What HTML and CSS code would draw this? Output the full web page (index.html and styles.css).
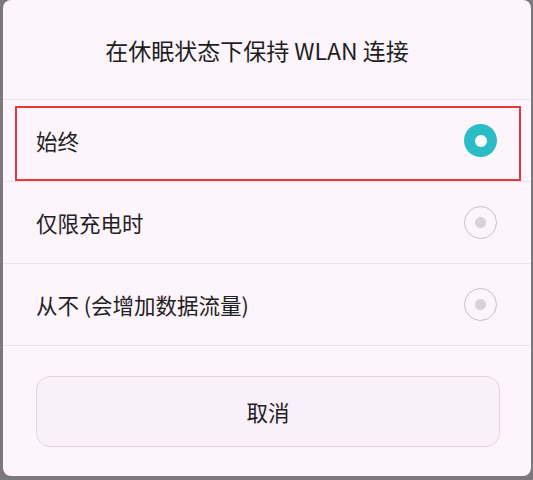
FILE: index.html
```html
<!DOCTYPE html>
<html>
<head>
  <meta charset="utf-8">
  <title>WLAN</title>
  <link rel="stylesheet" href="styles.css">
</head>
<body>
  <div class="dialog">
    <div class="dialog-title">在休眠状态下保持 WLAN 连接</div>

    <div class="option selected">
      <span class="option-label">始终</span>
      <span class="radio checked"></span>
      <div class="highlight"></div>
    </div>
    <div class="option">
      <span class="option-label">仅限充电时</span>
      <span class="radio"></span>
    </div>
    <div class="option">
      <span class="option-label">从不 (会增加数据流量)</span>
      <span class="radio"></span>
    </div>

    <div class="actions">
      <button class="cancel-button">取消</button>
    </div>
  </div>
</body>
</html>
```

FILE: styles.css
```css
body {
  margin: 0;
  background-color: #7b797c;
  font-family: "Noto Sans CJK SC", "Noto Sans", sans-serif;
  height: 480px;
  overflow: hidden;
}

.dialog {
  margin-left: 3px;
  width: 528px;
  height: 476px;
  background-color: #fdf4fc;
  border-radius: 8px;
  display: flex;
  flex-direction: column;
}

.dialog-title {
  height: 98px;
  display: flex;
  align-items: center;
  justify-content: center;
  font-size: 23px;
  color: #1f1f1f;
  border-bottom: 1px solid #ece2eb;
  padding: 1px 20px 0 0;
}

.option {
  position: relative;
  height: 81px;
  display: flex;
  align-items: center;
  justify-content: space-between;
  padding: 0 34px 0 33px;
  border-bottom: 1px solid #ece2eb;
}

.option-label {
  font-size: 21.5px;
  color: #222;
}

.radio {
  width: 31px;
  height: 31px;
  border: 1px solid #c8bfc8;
  border-radius: 50%;
  display: flex;
  align-items: center;
  justify-content: center;
}

.radio::after {
  content: "";
  width: 11px;
  height: 11px;
  border-radius: 50%;
  background-color: #d9d1db;
}

.radio.checked {
  border: none;
  width: 33px;
  height: 33px;
  background-color: #2bbcc8;
}

.radio.checked::after {
  width: 12px;
  height: 12px;
  background-color: #fff;
}

.highlight {
  position: absolute;
  left: 12px;
  top: 6px;
  width: 502px;
  height: 71px;
  border: 2px solid #e4393c;
}

.actions {
  padding: 30px 31px 0 33px;
}

.cancel-button {
  width: 100%;
  height: 71px;
  border: 1px solid #e0d5e0;
  border-radius: 14px;
  background-color: #f9f0fb;
  font-family: inherit;
  font-size: 21.5px;
  color: #1f1f1f;
}
```
